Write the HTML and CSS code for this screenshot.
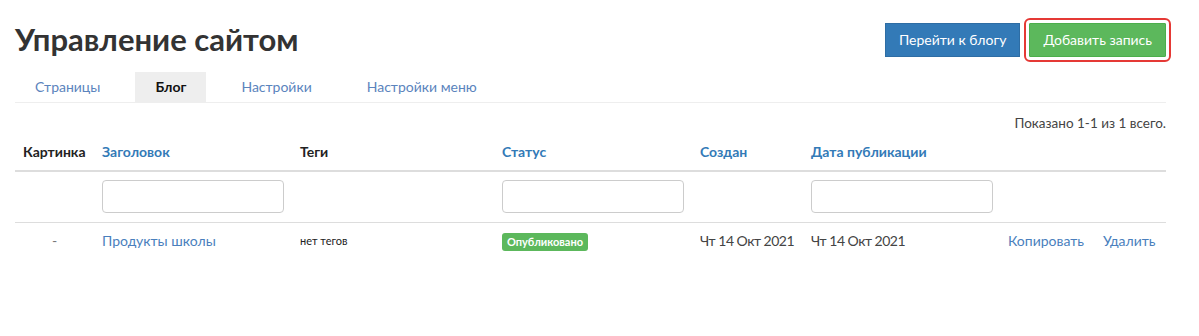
FILE: index.html
```html
<!DOCTYPE html>
<html lang="ru">
<head>
<meta charset="utf-8">
<title>Управление сайтом</title>
<link rel="stylesheet" href="styles.css">
</head>
<body>
<div class="page">
  <div class="head">
    <h1 class="title">Управление сайтом</h1>
    <div class="actions">
      <a class="btn btn-blue" href="#">Перейти к блогу</a>
      <a class="btn btn-green btn-marked" href="#">Добавить запись</a>
    </div>
  </div>
  <ul class="tabs">
    <li><a class="tab" href="#">Страницы</a></li>
    <li><a class="tab active" href="#">Блог</a></li>
    <li><a class="tab" href="#">Настройки</a></li>
    <li><a class="tab" href="#">Настройки меню</a></li>
  </ul>
  <div class="summary">Показано 1-1 из 1 всего.</div>
  <table class="grid">
    <colgroup>
      <col class="c1"><col class="c2"><col class="c3"><col class="c4"><col class="c5"><col class="c6"><col class="c7">
    </colgroup>
    <thead>
      <tr class="hdr">
        <th>Картинка</th>
        <th><a href="#">Заголовок</a></th>
        <th>Теги</th>
        <th><a href="#">Статус</a></th>
        <th><a href="#">Создан</a></th>
        <th><a href="#">Дата публикации</a></th>
        <th></th>
      </tr>
      <tr class="filters">
        <td></td>
        <td><input class="field" type="text"></td>
        <td></td>
        <td><input class="field" type="text"></td>
        <td></td>
        <td><input class="field" type="text"></td>
        <td></td>
      </tr>
    </thead>
    <tbody>
      <tr class="row">
        <td class="center muted">-</td>
        <td><a href="#">Продукты школы</a></td>
        <td class="small">нет тегов</td>
        <td><span class="badge">Опубликовано</span></td>
        <td class="date">Чт 14 Окт 2021</td>
        <td class="date">Чт 14 Окт 2021</td>
        <td class="ops"><a href="#">Копировать</a><a href="#">Удалить</a></td>
      </tr>
    </tbody>
  </table>
</div>
</body>
</html>
```
FILE: styles.css
```css
* { box-sizing: border-box; }
html, body { margin: 0; padding: 0; background: #fff; }
body {
  font-family: Lato, "Liberation Sans", sans-serif;
  font-size: 14px;
  line-height: 20px;
  color: #333;
}
a { color: #337ab7; text-decoration: none; }
.page { width: 1166px; padding-left: 15px; }
.head {
  display: flex;
  justify-content: space-between;
  align-items: flex-start;
  height: 72px;
}
.title {
  margin: 19px 0 0;
  font-size: 31px;
  line-height: 40px;
  font-weight: 700;
  color: #333;
}
.actions { display: flex; gap: 9px; margin-top: 23px; }
.btn {
  display: block;
  height: 34px;
  padding: 0 13px;
  color: #fff;
  font-size: 14px;
}
.btn-blue { background: #337ab7; border: 1px solid #2e6da4; line-height: 32px; }
.btn-green { background: #5cb85c; border: 1px solid #4cae4c; line-height: 32px; }
.btn-marked {
  outline: 2px solid #e53935;
  outline-offset: 3px;
  border-radius: 1px;
}
.tabs {
  display: flex;
  gap: 15px;
  list-style: none;
  margin: 0;
  padding: 0;
  border-bottom: 1px solid #eee;
}
.tab {
  display: block;
  padding: 5px 20px;
  height: 30px;
  color: #5b84bd;
}
.tab.active { background: #eee; color: #111; font-weight: 700; }
.summary { text-align: right; margin-top: 10px; color: #444; font-size: 13.5px; }
.grid {
  width: 100%;
  table-layout: fixed;
  border-collapse: collapse;
  margin-top: 0;
}
.c1 { width: 79px; }
.c2 { width: 198px; }
.c3 { width: 202px; }
.c4 { width: 198px; }
.c5 { width: 111px; }
.c6 { width: 197px; }
.grid th, .grid td { padding: 8px; text-align: left; vertical-align: middle; white-space: nowrap; }
.hdr th { font-weight: 700; border-bottom: 2px solid #ddd; color: #222; height: 38px; }
.hdr th a { color: #337ab7; }
.filters td { border-bottom: 1px solid #ddd; height: 51px; }
.field {
  display: block;
  width: 182px;
  height: 33px;
  border: 1px solid #ccc;
  border-radius: 4px;
  background: #fff;
  font: inherit;
}
.row td { color: #444; height: 38px; }
.row a { color: #4a7fbd; }
.date { letter-spacing: -0.5px; }
.center { text-align: center !important; }
.muted { color: #777 !important; }
.small { font-size: 11px; color: #222 !important; }
.badge {
  display: inline-block;
  background: #5cb85c;
  color: #fff;
  font-size: 11px;
  font-weight: 700;
  line-height: 12px;
  padding: 3px 5px 3px;
  border-radius: 3px;
}
.ops a + a { margin-left: 19px; }
```
